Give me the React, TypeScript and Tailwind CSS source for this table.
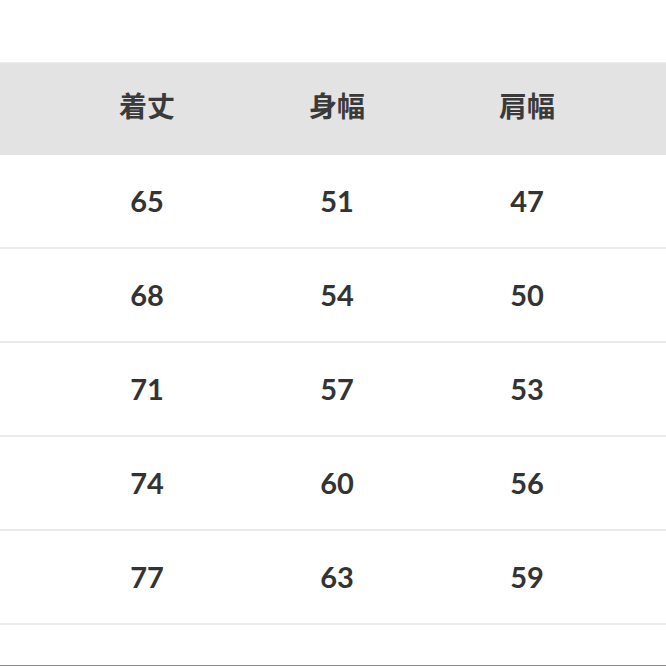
const rows = [
  ["65", "51", "47"],
  ["68", "54", "50"],
  ["71", "57", "53"],
  ["74", "60", "56"],
  ["77", "63", "59"],
];

const headers = ["着丈", "身幅", "肩幅"];

export default function App() {
  return (
    <div className="w-[666px] h-[666px] bg-white overflow-hidden flex flex-col font-['Lato','Noto_Sans_CJK_JP',sans-serif]">
      <div className="h-[62px]" />
      {/* Header */}
      <div className="h-[93px] pb-[8px] bg-[#e3e3e3] border-t border-[#ececec] grid grid-cols-[52px_190px_190px_190px_1fr] items-center">
        <div />
        {headers.map((h) => (
          <div
            key={h}
            className="text-center text-[28px] font-bold text-[#3a3a3a] font-['Noto_Sans_CJK_JP',sans-serif] leading-none"
          >
            {h}
          </div>
        ))}
        <div />
      </div>

      {/* Rows */}
      {rows.map((r, i) => (
        <div
          key={i}
          className="h-[94px] pb-[2px] border-b-2 border-[#ebebeb] grid grid-cols-[52px_190px_190px_190px_1fr] items-center"
        >
          <div />
          {r.map((v, j) => (
            <div key={j} className="text-center text-[29px] font-bold text-[#333333] leading-none">
              {v}
            </div>
          ))}
          <div />
        </div>
      ))}

      <div className="flex-1" />
      <div className="h-px bg-[#8a8a8a]" />
    </div>
  );
}
